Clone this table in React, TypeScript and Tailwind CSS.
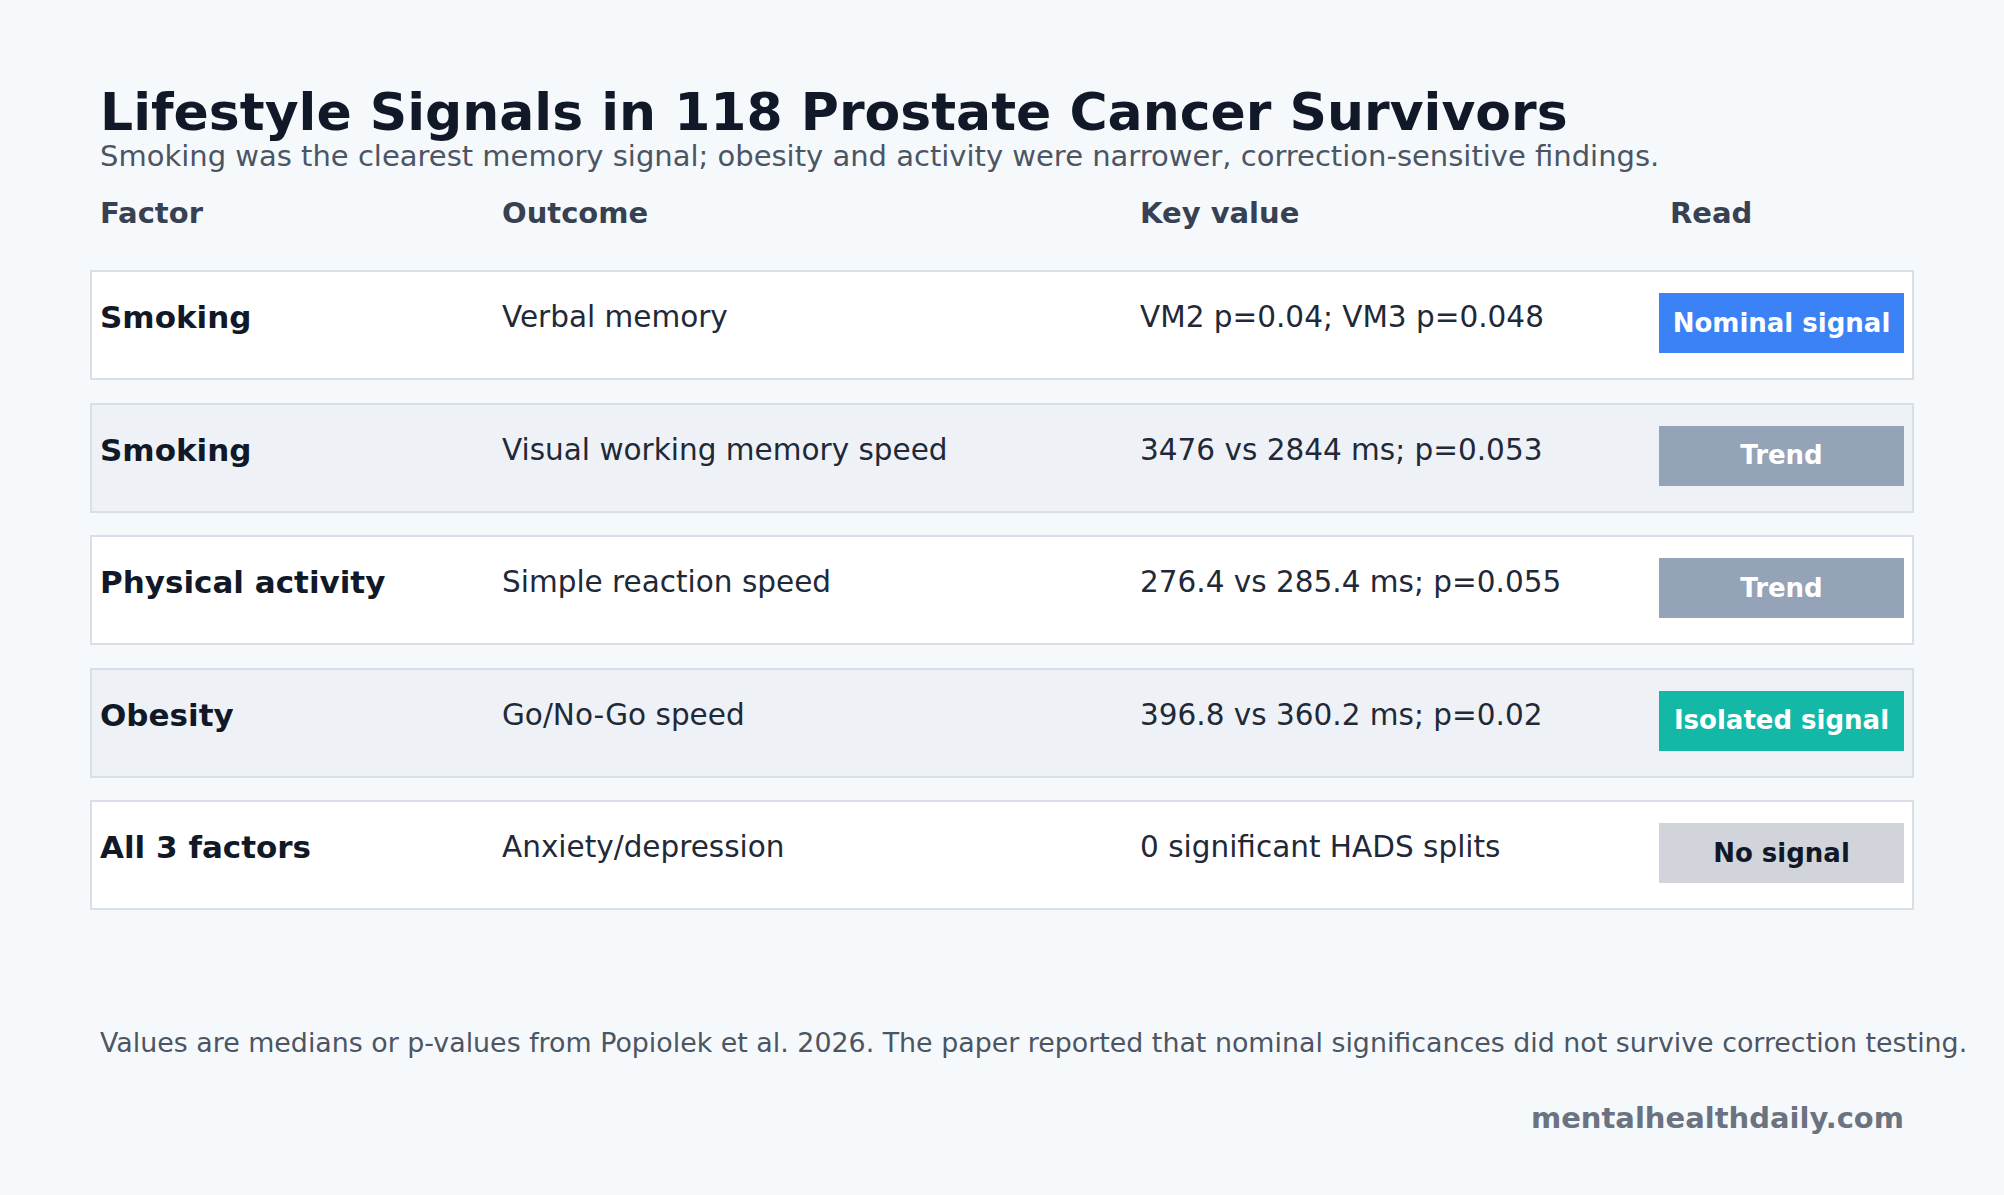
const rows = [
  { factor: "Smoking", outcome: "Verbal memory", value: "VM2 p=0.04; VM3 p=0.048", read: "Nominal signal", tone: "blue", shade: false },
  { factor: "Smoking", outcome: "Visual working memory speed", value: "3476 vs 2844 ms; p=0.053", read: "Trend", tone: "slate", shade: true },
  { factor: "Physical activity", outcome: "Simple reaction speed", value: "276.4 vs 285.4 ms; p=0.055", read: "Trend", tone: "slate", shade: false },
  { factor: "Obesity", outcome: "Go/No-Go speed", value: "396.8 vs 360.2 ms; p=0.02", read: "Isolated signal", tone: "teal", shade: true },
  { factor: "All 3 factors", outcome: "Anxiety/depression", value: "0 significant HADS splits", read: "No signal", tone: "gray", shade: false },
];

const badgeTone: Record<string, string> = {
  blue: "bg-[#3b82f6] text-white",
  slate: "bg-[#94a3b8] text-white",
  teal: "bg-[#14b8a6] text-white",
  gray: "bg-[#d1d5db] text-[#111827]",
};

const Badge = ({ label, tone }: { label: string; tone: string }) => (
  <div className={`mt-[21px] h-[60px] w-[245px] flex items-center justify-center overflow-hidden ${badgeTone[tone]}`}>
    <span className="whitespace-nowrap text-[26px] font-bold">{label}</span>
  </div>
);

export default function App() {
  return (
    <div className="min-h-screen w-full bg-[#f6f9fc] font-['DejaVu_Sans',sans-serif]">
      <div className="pl-[90px] pt-[85px] w-[1914px]">
        <h1 className="pl-[10px] text-[52px] leading-[55px] font-bold text-[#111827] whitespace-nowrap">
          Lifestyle Signals in 118 Prostate Cancer Survivors
        </h1>
        <p className="pl-[10px] text-[29px] leading-[32px] text-[#4b5563] whitespace-nowrap">
          Smoking was the clearest memory signal; obesity and activity were narrower, correction-sensitive findings.
        </p>

        <div className="mt-[25px] grid grid-cols-[412px_638px_519px_255px] text-[29px] leading-[32px] font-bold text-[#374151]">
          <div className="pl-[10px]">Factor</div>
          <div>Outcome</div>
          <div>Key value</div>
          <div className="pl-[11px]">Read</div>
        </div>

        <div className="mt-[41px] flex flex-col gap-[22.5px]">
          {rows.map((r, i) => (
            <div
              key={i}
              className={`h-[110px] border-2 border-[#d9dfe8] pl-[8px] grid grid-cols-[402px_638px_519px_245px] items-start ${r.shade ? "bg-[#eef2f7]" : "bg-white"}`}
            >
              <div className="pt-[28px] text-[31px] leading-[35px] font-bold text-[#111827] whitespace-nowrap">{r.factor}</div>
              <div className="pt-[28px] text-[29.5px] leading-[35px] text-[#1f2937] whitespace-nowrap">{r.outcome}</div>
              <div className="pt-[28px] text-[29.5px] leading-[35px] text-[#1f2937] whitespace-nowrap">{r.value}</div>
              <Badge label={r.read} tone={r.tone} />
            </div>
          ))}
        </div>

        <p className="mt-[118px] pl-[10px] text-[26.85px] leading-[30px] text-[#4b5563] whitespace-nowrap">
          Values are medians or p-values from Popiolek et al. 2026. The paper reported that nominal significances did not survive correction testing.
        </p>
        <div className="mt-[44px] pr-[10px] text-right text-[29px] leading-[32px] font-bold text-[#6b7280]">
          mentalhealthdaily.com
        </div>
      </div>
    </div>
  );
}
